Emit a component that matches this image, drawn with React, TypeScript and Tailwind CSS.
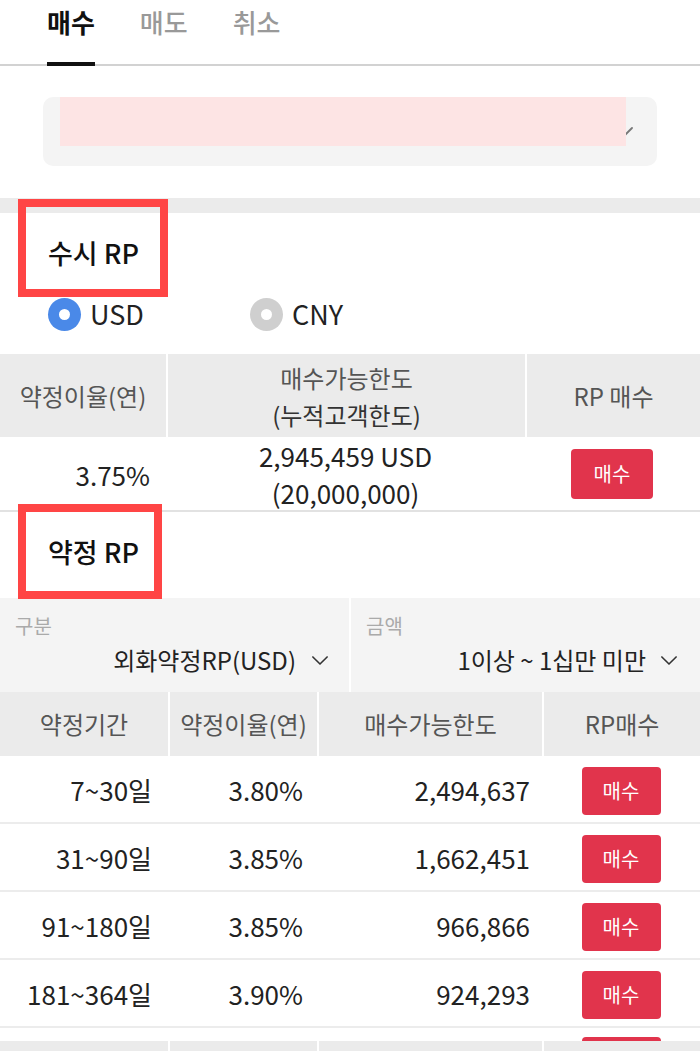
import React from "react";

const rows = [
  { p: "7~30일", r: "3.80%", l: "2,494,637" },
  { p: "31~90일", r: "3.85%", l: "1,662,451" },
  { p: "91~180일", r: "3.85%", l: "966,866" },
  { p: "181~364일", r: "3.90%", l: "924,293" },
];

function Chevron({ className }: { className?: string }) {
  return (
    <svg className={className} viewBox="0 0 18 10" fill="none" stroke="currentColor" strokeWidth="1.8" strokeLinecap="round" strokeLinejoin="round">
      <path d="M1 1l8 8 8-8" />
    </svg>
  );
}

function BuyBtn({ w, h, label = "매수" }: { w: string; h: string; label?: string }) {
  return (
    <div className={`${w} ${h} shrink-0 rounded-[4px] bg-[#e1344c] text-white text-[20px] flex items-center justify-center`}>{label}</div>
  );
}

export default function App() {
  return (
    <div className="w-[700px] h-[1051px] overflow-hidden bg-white text-[#222] font-['Noto_Sans_CJK_KR','Noto_Sans',sans-serif]">
      {/* Tabs */}
      <div className="flex h-[66px] border-b-2 border-[#d2d2d2] pl-[47px] gap-[45px]">
        <div className="-mb-[2px] h-[66px] border-b-4 border-[#111] pt-[3px] text-[26px] leading-[38px] font-bold text-[#111]">매수</div>
        <div className="h-[64px] pt-[3px] text-[26px] leading-[38px] font-medium text-[#999]">매도</div>
        <div className="h-[64px] pt-[3px] text-[26px] leading-[38px] font-medium text-[#999]">취소</div>
      </div>

      {/* Account select */}
      <div className="px-[43px] pt-[31px] pb-[32px]">
        <div className="relative h-[69px] rounded-[10px] bg-[#f4f4f4] flex items-center justify-end pr-[24px]">
          <Chevron className="w-[18px] h-[10px] text-[#777]" />
          <div className="absolute left-[17px] top-0 w-[566px] h-[49px] bg-[#fde4e4]" />
        </div>
      </div>

      <div className="h-[15px] bg-[#ebebeb]" />

      {/* 수시 RP */}
      <div className="relative h-[80px] pl-[48px] pt-[20px] text-[27px] leading-[40px] font-medium text-[#111]">
        수시 RP
        <div className="absolute left-[18px] -top-[14px] w-[150px] h-[98px] border-[8px] border-[#ff4545]" />
      </div>
      <div className="flex items-center h-[42px] pl-[48px] text-[27px]">
        <div className="flex items-center w-[202px] gap-[9px]">
          <div className="w-[33px] h-[33px] rounded-full bg-[#4a89e8] flex items-center justify-center">
            <div className="w-[11px] h-[11px] rounded-full bg-white" />
          </div>
          <span>USD</span>
        </div>
        <div className="flex items-center gap-[9px]">
          <div className="w-[33px] h-[33px] rounded-full bg-[#cfcfcf] flex items-center justify-center">
            <div className="w-[11px] h-[11px] rounded-full bg-white" />
          </div>
          <span>CNY</span>
        </div>
      </div>

      <div className="mt-[19px] grid grid-cols-[166px_357px_173px] gap-x-[2px]">
        <div className="h-[83px] bg-[#ebebeb] flex items-center justify-center text-[24px] text-[#555]">약정이율(연)</div>
        <div className="h-[83px] bg-[#ebebeb] flex flex-col items-center justify-center text-[24px] leading-[37px] text-[#555]">
          <span>매수가능한도</span>
          <span className="text-[#333]">(누적고객한도)</span>
        </div>
        <div className="h-[83px] bg-[#ebebeb] flex items-center justify-center text-[24px] text-[#555]">RP 매수</div>
      </div>
      <div className="grid grid-cols-[166px_359px_175px] h-[75px] border-b-2 border-[#e2e2e2]">
        <div className="flex items-center justify-end pr-[16px] text-[26px]">3.75%</div>
        <div className="flex flex-col items-center justify-center text-[26px] leading-[37px]">
          <span>2,945,459 USD</span>
          <span>(20,000,000)</span>
        </div>
        <div className="flex items-center justify-center pr-[1px]">
          <BuyBtn w="w-[82px]" h="h-[50px]" />
        </div>
      </div>

      {/* 약정 RP */}
      <div className="relative h-[86px] pl-[48px] pt-[20px] text-[27px] leading-[40px] font-medium text-[#111]">
        약정 RP
        <div className="absolute left-[18px] -top-[8px] w-[144px] h-[95px] border-[8px] border-[#ff4545] z-10" />
      </div>

      <div className="grid grid-cols-[349px_349px] gap-x-[2px]">
        <div className="h-[94px] bg-[#f4f4f4] flex flex-col pl-[15px] pr-[21px] pt-[13px]">
          <span className="text-[20px] leading-[30px] text-[#aaa]">구분</span>
          <div className="flex items-center justify-end gap-[16px] text-[24px] leading-[38px]">
            <span>외화약정RP(USD)</span>
            <Chevron className="w-[16px] h-[9px] text-[#333]" />
          </div>
        </div>
        <div className="h-[94px] bg-[#f4f4f4] flex flex-col pl-[15px] pr-[23px] pt-[13px]">
          <span className="text-[20px] leading-[30px] text-[#aaa]">금액</span>
          <div className="flex items-center justify-end gap-[15px] text-[24px] leading-[38px]">
            <span>1이상 ~ 1십만 미만</span>
            <Chevron className="w-[16px] h-[9px] text-[#333]" />
          </div>
        </div>
      </div>

      <div className="grid grid-cols-[168px_147px_223px_156px] gap-x-[2px]">
        {["약정기간", "약정이율(연)", "매수가능한도", "RP매수"].map((h) => (
          <div key={h} className="h-[64px] bg-[#ebebeb] flex items-center justify-center text-[24px] text-[#555]">{h}</div>
        ))}
      </div>

      {rows.map((r) => (
        <div key={r.p} className="grid grid-cols-[168px_149px_225px_158px] h-[68px] border-b-2 border-[#ececec] text-[26px]">
          <div className="flex items-center justify-end pr-[16px]">{r.p}</div>
          <div className="flex items-center justify-end pr-[14px]">{r.r}</div>
          <div className="flex items-center justify-end pr-[12px]">{r.l}</div>
          <div className="flex items-center justify-center pt-[3px]">
            <BuyBtn w="w-[79px]" h="h-[48px]" />
          </div>
        </div>
      ))}
      <div className="grid grid-cols-[168px_149px_225px_158px] h-[13px] overflow-hidden">
        <div />
        <div />
        <div />
        <div className="flex justify-center pt-[9px]">
          <BuyBtn w="w-[79px]" h="h-[48px]" label="" />
        </div>
      </div>
      <div className="grid grid-cols-[168px_147px_223px_156px] gap-x-[2px]">
        {[0, 1, 2, 3].map((i) => (
          <div key={i} className="h-[64px] bg-[#ebebeb]" />
        ))}
      </div>
    </div>
  );
}
